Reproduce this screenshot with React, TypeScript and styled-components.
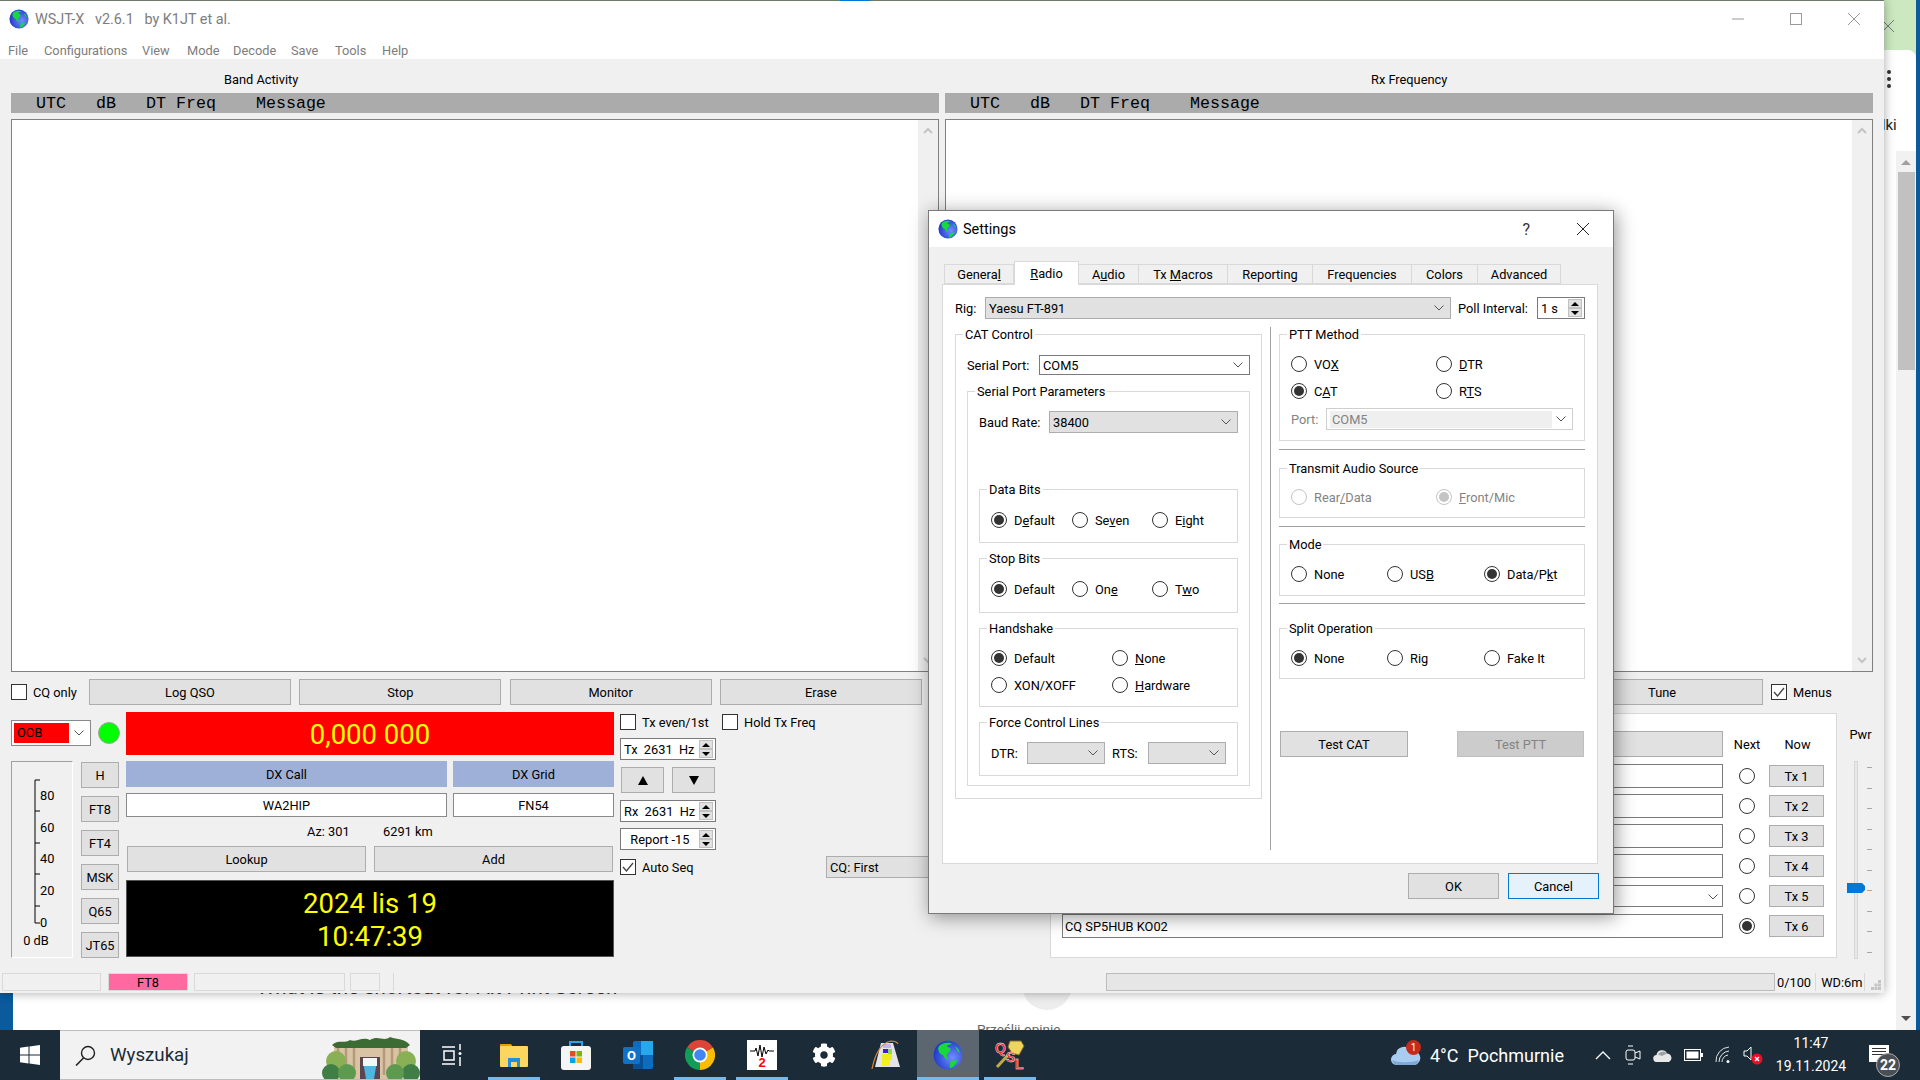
import styled, { createGlobalStyle } from "styled-components";
import { FaCog } from "react-icons/fa";
import type { ReactNode } from "react";

const Global = createGlobalStyle`
  html, body { margin: 0; padding: 0; background: #fff; }
  * { box-sizing: border-box; }
  body { font-family: Roboto, "Open Sans", sans-serif; font-size: 12.8px; color: #000; }
`;

const Desktop = styled.div`
  width: 1920px;
  height: 1080px;
  position: relative;
  overflow: hidden;
  display: flex;
  flex-direction: column;
`;

const Workspace = styled.div`
  position: relative;
  height: 1030px;
  background: #fff;
`;

/* ---- browser window peeking out from behind ---- */
const Peek = styled.div`
  position: absolute;
  left: 1884px;
  top: 0;
  width: 36px;
  height: 1030px;
  display: flex;
`;
const PeekPage = styled.div`
  width: 32px;
  background: #cbe8c0;
  position: relative;
`;
const PeekBody = styled.div`
  position: absolute;
  inset: 50px 0 0 0;
  background: #fff;
  border-top-right-radius: 8px;
`;
const PeekEdge = styled.div`
  width: 4px;
  background: #0a5a9c;
`;
const PeekClose = styled.svg`
  position: absolute;
  left: 0;
  top: 20px;
`;
const PeekDots = styled.div`
  position: absolute;
  left: 3px;
  top: 70px;
  display: flex;
  flex-direction: column;
  gap: 3px;
  i { display: block; width: 4px; height: 4px; border-radius: 50%; background: #333; }
`;
const PeekText = styled.div`
  position: absolute;
  left: -7px;
  top: 116px;
  font-size: 15px;
  color: #222;
`;
const PeekScroll = styled.div`
  position: absolute;
  left: 12px;
  top: 151px;
  width: 20px;
  bottom: 0;
  background: #f1f1f1;
  display: flex;
  flex-direction: column;
  align-items: center;
  padding-top: 9px;
`;
const ScrollThumb = styled.div`
  width: 17px;
  height: 198px;
  background: #c1c1c1;
  margin-top: 7px;
`;
const ScrollArrow = styled.div<{ $down?: boolean }>`
  width: 0;
  height: 0;
  border-left: 5px solid transparent;
  border-right: 5px solid transparent;
  ${(p) => (p.$down ? "border-top: 5px solid #505050; margin-top: auto; margin-bottom: 9px;" : "border-bottom: 5px solid #a0a0a0;")}
`;
const BlueBit = styled.div`
  position: absolute;
  left: 0;
  top: 985px;
  width: 13px;
  height: 45px;
  background: #0a5a9c;
`;
const PageHeading = styled.div`
  position: absolute;
  left: 257px;
  top: 975px;
  font-size: 20.5px;
  color: #333;
  white-space: nowrap;
`;
const PageCircle = styled.div`
  position: absolute;
  left: 1022px;
  top: 960px;
  width: 50px;
  height: 50px;
  border-radius: 50%;
  background: #ededed;
`;
const PageLink = styled.div`
  position: absolute;
  left: 977px;
  top: 1021px;
  font-size: 13.5px;
  color: #666;
  white-space: nowrap;
`;

/* ---- main window ---- */
const MainWindow = styled.div`
  position: absolute;
  left: 0;
  top: 0;
  width: 1884px;
  height: 993px;
  background: #f0f0f0;
  border-top: 1px solid #6c7a6c;
  box-shadow: 0 0 10px rgba(0, 0, 0, 0.35);
  display: flex;
  flex-direction: column;
`;
const TopAccent = styled.div`
  position: absolute;
  top: -1px;
  left: 840px;
  width: 30px;
  height: 1px;
  background: #0078d7;
`;
const TitleBar = styled.div`
  height: 35px;
  background: #fff;
  display: flex;
  align-items: center;
  padding-left: 9px;
  color: #7d7d7d;
  font-size: 14.4px;
  white-space: pre;
`;
const TitleText = styled.span`
  margin: 2px 0 0 6px;
`;
const WinButtons = styled.div`
  margin-left: auto;
  display: flex;
  align-items: center;
  padding-right: 24px;
  gap: 46px;
`;
const MenuBar = styled.div`
  height: 23px;
  background: #fff;
  display: flex;
  align-items: center;
  padding: 5px 0 0 8px;
  color: #7d7d7d;
`;
const MenuItem = styled.span<{ $w: number }>`
  width: ${(p) => p.$w}px;
`;
const Panels = styled.div`
  display: grid;
  grid-template-columns: 928px 928px;
  column-gap: 6px;
  padding-left: 11px;
`;
const PanelTitle = styled.div<{ $indent: number }>`
  height: 34px;
  padding: 13px 0 0 ${(p) => p.$indent}px;
`;
const MonoHeader = styled.div`
  height: 20px;
  background: #ababab;
  font-family: "Liberation Mono", monospace;
  font-size: 16.67px;
  line-height: 22px;
  padding-left: 25px;
  white-space: pre;
`;
const LogBox = styled.div`
  margin-top: 6px;
  height: 553px;
  background: #fff;
  border: 1px solid #808080;
  display: flex;
  justify-content: flex-end;
`;
const LogScroll = styled.div`
  width: 20px;
  background: #f0f0f0;
  display: flex;
  flex-direction: column;
  justify-content: space-between;
  align-items: center;
  padding: 7px 0;
`;
const ActionRow = styled.div`
  margin: 7px 0 0 11px;
  height: 26px;
  display: flex;
  align-items: center;
`;
const Btn = styled.div<{ $w?: number; $h?: number; $off?: boolean; $focus?: boolean }>`
  width: ${(p) => (p.$w ? `${p.$w}px` : "auto")};
  height: ${(p) => p.$h ?? 26}px;
  flex-shrink: 0;
  display: flex;
  align-items: center;
  justify-content: center;
  padding-top: 1px;
  background: ${(p) => (p.$off ? "#cccccc" : p.$focus ? "#e5f1fb" : "#e1e1e1")};
  border: 1px solid ${(p) => (p.$off ? "#bfbfbf" : p.$focus ? "#0078d7" : "#adadad")};
  color: ${(p) => (p.$off ? "#838383" : "#000")};
  white-space: nowrap;
`;
const ActionButtons = styled.div`
  display: flex;
  gap: 8.3px;
  margin-left: 10px;
`;
const CheckRow = styled.label<{ $w?: number; $left?: number }>`
  display: flex;
  align-items: center;
  gap: 6px;
  width: ${(p) => (p.$w ? `${p.$w}px` : "auto")};
  margin-left: ${(p) => p.$left ?? 0}px;
  flex-shrink: 0;
  white-space: nowrap;
`;
const CheckBox = styled.span`
  width: 16px;
  height: 16px;
  background: #fff;
  border: 1px solid #333;
  display: flex;
  align-items: center;
  justify-content: center;
`;
const Bottom = styled.div`
  margin-top: 7px;
  height: 246px;
  display: flex;
  padding-left: 11px;
`;
const ColA = styled.div`
  width: 108px;
  flex-shrink: 0;
  padding-top: 8px;
`;
const BandRow = styled.div`
  display: flex;
  align-items: center;
  gap: 7px;
`;
const BandCombo = styled.div`
  width: 80px;
  height: 26px;
  flex-shrink: 0;
  border: 1px solid #8a8a8a;
  background: #fff;
  display: flex;
  align-items: center;
  padding: 0 6px 0 2px;
  justify-content: space-between;
`;
const BandValue = styled.div`
  width: 55px;
  height: 20px;
  background: #ff0000;
  line-height: 20px;
  padding-left: 3px;
`;
const Led = styled.div`
  width: 22px;
  height: 22px;
  flex-shrink: 0;
  border-radius: 50%;
  background: #00ff00;
  border: 1px solid #a0a0a0;
`;
const MeterRow = styled.div`
  margin-top: 15px;
  display: flex;
`;
const MeterPanel = styled.div`
  width: 62px;
  height: 197px;
  border: 1px solid;
  border-color: #a0a0a0 #fff #fff #a0a0a0;
`;
const ModeColumn = styled.div`
  margin: 1px 0 0 8px;
  width: 38px;
  display: flex;
  flex-direction: column;
  gap: 8px;
`;
const ColB = styled.div`
  margin-left: 7px;
  width: 488px;
`;
const FreqDisplay = styled.div`
  height: 43px;
  background: #ff0000;
  color: #ffff00;
  font-size: 27.5px;
  padding-top: 1px;
  display: flex;
  align-items: center;
  justify-content: center;
`;
const DxGrid = styled.div<{ $top: number }>`
  margin-top: ${(p) => p.$top}px;
  display: grid;
  grid-template-columns: 321px 161px;
  column-gap: 6px;
`;
const DxLabel = styled.div`
  height: 26px;
  background: #9fb0d8;
  padding-top: 1px;
  display: flex;
  align-items: center;
  justify-content: center;
`;
const DxInput = styled.div`
  height: 24px;
  background: #fff;
  border: 1px solid #8a8a8a;
  padding-top: 1px;
  display: flex;
  align-items: center;
  justify-content: center;
`;
const AzRow = styled.div`
  height: 29px;
  display: flex;
  align-items: center;
  padding-left: 181px;
  span:first-child { width: 76px; }
`;
const LookupRow = styled.div`
  display: flex;
  gap: 8px;
  padding-left: 1px;
`;
const ClockPanel = styled.div`
  margin-top: 8px;
  height: 77px;
  background: #000;
  border: 1px solid #555;
  color: #ffff00;
  font-size: 27.5px;
  line-height: 33px;
  text-align: center;
  padding-top: 6px;
`;
const ColC = styled.div`
  margin-left: 6px;
  width: 430px;
  padding-top: 2px;
`;
const TopChecks = styled.div`
  display: flex;
`;
const Spin = styled.div<{ $w?: number; $h?: number; $top?: number }>`
  margin-top: ${(p) => p.$top ?? 0}px;
  width: ${(p) => p.$w ?? 96}px;
  height: ${(p) => p.$h ?? 22}px;
  border: 1px solid #7a7a7a;
  background: #fff;
  display: flex;
  align-items: center;
  justify-content: space-between;
  padding: 0 2px 0 3px;
  white-space: pre;
  flex-shrink: 0;
`;
const SpinButtons = styled.div`
  width: 14px;
  height: 18px;
  display: flex;
  flex-direction: column;
`;
const SpinStep = styled.div`
  flex: 1;
  background: #e1e1e1;
  border: 1px solid #c0c0c0;
  display: flex;
  align-items: center;
  justify-content: center;
`;
const Tri = styled.i<{ $down?: boolean }>`
  display: block;
  border-left: 4px solid transparent;
  border-right: 4px solid transparent;
  ${(p) => (p.$down ? "border-top: 4px solid #000;" : "border-bottom: 4px solid #000;")}
`;
const StepRow = styled.div`
  margin: 7px 0 0 1px;
  display: flex;
  gap: 8px;
`;
const BigTri = styled.i<{ $down?: boolean }>`
  display: block;
  border-left: 5px solid transparent;
  border-right: 5px solid transparent;
  ${(p) => (p.$down ? "border-top: 9px solid #000;" : "border-bottom: 9px solid #000;")}
`;
const AutoRow = styled.div`
  margin-top: 6px;
  display: flex;
  align-items: center;
`;
const CqButton = styled(Btn)`
  justify-content: flex-start;
  padding-left: 3px;
`;
const TxPanel = styled.div`
  margin-top: 1px;
  width: 787px;
  height: 245px;
  background: #fff;
  border: 1px solid #d9d9d9;
  padding: 17px 0 0 11px;
  display: grid;
  grid-template-columns: 661px 16px 55px;
  grid-template-rows: 27px repeat(6, 24px);
  align-content: start;
  column-gap: 16px;
  row-gap: 6px;
  align-items: center;
`;
const TxHead = styled.div`
  height: 26px;
  margin-bottom: 1px;
  display: flex;
  align-items: center;
  justify-content: center;
  white-space: nowrap;
`;
const TxHeadButton = styled(Btn)`
  margin-bottom: 1px;
`;
const TxInput = styled.div`
  height: 24px;
  background: #fff;
  border: 1px solid #7a7a7a;
  padding: 1px 4px 0 2px;
  display: flex;
  align-items: center;
  justify-content: space-between;
`;
const TxCombo = styled(TxInput)`
  height: 22px;
`;
const NowColumn = styled.div`
  margin-left: -2px;
  width: 55px;
  text-align: center;
`;
const ColE = styled.div`
  width: 47px;
`;
const PwrLabel = styled.div`
  margin-top: 15px;
  height: 16px;
  line-height: 16px;
  text-align: center;
`;
const PwrSlider = styled.div`
  margin: 18px 0 0 8px;
  svg { display: block; }
`;
const StatusBar = styled.div`
  margin: 15px 0 0 2px;
  height: 18px;
  display: flex;
  align-items: center;
`;
const StatusCell = styled.div<{ $w: number; $left: number; $bg?: string }>`
  width: ${(p) => p.$w}px;
  margin-left: ${(p) => p.$left}px;
  height: 18px;
  border: 1px solid #d9d9d9;
  background: ${(p) => p.$bg ?? "transparent"};
  display: flex;
  align-items: center;
  justify-content: center;
`;
const StatusSep = styled.div<{ $left: number }>`
  width: 1px;
  height: 18px;
  background: #d9d9d9;
  margin-left: ${(p) => p.$left}px;
`;
const Progress = styled.div`
  margin-left: auto;
  width: 669px;
  height: 18px;
  background: #e6e6e6;
  border: 1px solid #bcbcbc;
`;
const StatusText = styled.div<{ $w: number }>`
  width: ${(p) => p.$w}px;
  padding-left: 2px;
  white-space: nowrap;
`;
const Grip = styled.svg`
  margin: 6px 3px 0 6px;
`;

/* ---- settings dialog ---- */
const Dialog = styled.div`
  position: absolute;
  left: 928px;
  top: 210px;
  width: 686px;
  height: 704px;
  background: #f0f0f0;
  border: 1px solid #7a7a7a;
  box-shadow: 2px 3px 18px rgba(0, 0, 0, 0.42);
  display: flex;
  flex-direction: column;
`;
const DialogTitle = styled.div`
  height: 36px;
  background: #fff;
  display: flex;
  align-items: center;
  padding-left: 9px;
  font-size: 14.5px;
`;
const DialogName = styled.span`
  margin-left: 5px;
`;
const DialogHelp = styled.span`
  margin-left: auto;
  margin-right: 47px;
  font-size: 16px;
  color: #333;
`;
const DialogClose = styled.div`
  margin-right: 24px;
  height: 12px;
  svg { display: block; }
`;
const DialogBody = styled.div`
  padding: 13px 0 0 13px;
`;
const TabStrip = styled.div`
  display: flex;
  align-items: flex-end;
  height: 24px;
  padding-left: 2px;
  position: relative;
  z-index: 1;
`;
const Tab = styled.div<{ $w: number; $active?: boolean }>`
  width: ${(p) => p.$w}px;
  height: ${(p) => (p.$active ? 24 : 20)}px;
  margin-bottom: ${(p) => (p.$active ? -1 : 0)}px;
  background: ${(p) => (p.$active ? "#fff" : "#f0f0f0")};
  border: 1px solid #d9d9d9;
  border-bottom: ${(p) => (p.$active ? "none" : "1px solid #d9d9d9")};
  border-left: ${(p) => (p.$active ? "1px solid #d9d9d9" : "none")};
  display: flex;
  align-items: center;
  justify-content: center;
  white-space: pre;
  &:first-child { border-left: 1px solid #d9d9d9; }
`;
const Pane = styled.div`
  width: 656px;
  height: 580px;
  background: #fff;
  border: 1px solid #d9d9d9;
  padding: 12px 0 0 12px;
`;
const Mn = styled.span`
  text-decoration: underline;
`;
const RigRow = styled.div`
  display: flex;
  align-items: center;
  height: 22px;
`;
const FieldLabel = styled.span<{ $w: number; $off?: boolean; $left?: number }>`
  width: ${(p) => p.$w}px;
  margin-left: ${(p) => p.$left ?? 0}px;
  flex-shrink: 0;
  color: ${(p) => (p.$off ? "#838383" : "#000")};
  white-space: nowrap;
`;
const Combo = styled.div<{ $w: number; $h?: number; $kind?: "white" | "gray" | "off" }>`
  width: ${(p) => p.$w}px;
  height: ${(p) => p.$h ?? 22}px;
  flex-shrink: 0;
  background: ${(p) => (p.$kind === "gray" ? "#e1e1e1" : "#fff")};
  border: 1px solid ${(p) => (p.$kind === "gray" ? "#adadad" : p.$kind === "off" ? "#cfcfcf" : "#7a7a7a")};
  color: ${(p) => (p.$kind === "off" ? "#838383" : "#000")};
  display: flex;
  align-items: center;
  justify-content: space-between;
  padding: 0 6px 0 3px;
`;
const OffValue = styled.div`
  width: 222px;
  height: 17px;
  line-height: 17px;
  background: #efefef;
  padding-left: 2px;
`;
const PollLabel = styled.span`
  margin-left: 7px;
  width: 79px;
  white-space: nowrap;
`;
const Columns = styled.div`
  margin-top: 15px;
  display: flex;
  align-items: flex-start;
`;
const LeftCol = styled.div`
  width: 307px;
`;
const VLine = styled.div`
  width: 1px;
  height: 523px;
  margin: -7px 8px 0 8px;
  background: #a0a0a0;
`;
const RightCol = styled.div`
  width: 306px;
`;
const Group = styled.div<{ $h: number; $top?: number; $pad?: number }>`
  position: relative;
  height: ${(p) => p.$h}px;
  margin-top: ${(p) => p.$top ?? 0}px;
  border: 1px solid #d9d9d9;
  padding: ${(p) => p.$pad ?? 19}px 11px 0 11px;
`;
const Legend = styled.span`
  position: absolute;
  top: -8px;
  left: 7px;
  background: #fff;
  padding: 0 2px;
  line-height: 15px;
  white-space: nowrap;
`;
const InlineField = styled.div<{ $h?: number; $top?: number }>`
  display: flex;
  align-items: center;
  height: ${(p) => p.$h ?? 22}px;
  margin-top: ${(p) => p.$top ?? 0}px;
`;
const RadioGrid = styled.div<{ $cols: string }>`
  display: grid;
  grid-template-columns: ${(p) => p.$cols};
  grid-auto-rows: 20px;
  row-gap: 7px;
`;
const RadioOption = styled.div<{ $off?: boolean }>`
  display: flex;
  align-items: center;
  gap: 7px;
  white-space: nowrap;
  color: ${(p) => (p.$off ? "#838383" : "#000")};
`;
const RadioMark = styled.span<{ $on?: boolean; $off?: boolean }>`
  width: 16px;
  height: 16px;
  flex-shrink: 0;
  border-radius: 50%;
  background: #fff;
  border: 1px solid ${(p) => (p.$off ? "#c4c4c4" : "#333")};
  display: flex;
  align-items: center;
  justify-content: center;
  &::after {
    content: "";
    display: ${(p) => (p.$on ? "block" : "none")};
    width: 10px;
    height: 10px;
    border-radius: 50%;
    background: ${(p) => (p.$off ? "#c4c4c4" : "#333")};
  }
`;
const HLine = styled.div<{ $top: number }>`
  height: 1px;
  background: #a0a0a0;
  margin-top: ${(p) => p.$top}px;
`;
const TestRow = styled.div`
  margin-top: 52px;
  padding: 0 1px;
  display: flex;
  justify-content: space-between;
`;
const DialogFooter = styled.div`
  margin-top: 9px;
  padding-right: 14px;
  display: flex;
  justify-content: flex-end;
  gap: 9px;
`;

/* ---- taskbar ---- */
const Taskbar = styled.div`
  height: 50px;
  background: #1b2b38;
  display: flex;
  position: relative;
  z-index: 5;
`;
const StartButton = styled.div`
  width: 60px;
  display: flex;
  align-items: center;
  justify-content: center;
`;
const SearchBox = styled.div`
  width: 360px;
  background: #f2f2f2;
  border-top: 1px solid #bdbdbd;
  border-bottom: 1px solid #bdbdbd;
  display: flex;
  align-items: center;
  padding-left: 15px;
  gap: 14px;
  font-size: 18.7px;
  color: #1b2b38;
`;
const SearchArt = styled.div`
  margin-left: auto;
  height: 48px;
  svg { display: block; }
`;
const TaskView = styled.div`
  width: 63px;
  display: flex;
  align-items: center;
  justify-content: center;
`;
const AppSlot = styled.div<{ $open?: boolean; $active?: boolean }>`
  width: 62px;
  position: relative;
  display: flex;
  align-items: center;
  justify-content: center;
  background: ${(p) => (p.$active ? "#5b6670" : "transparent")};
  &::after {
    content: "";
    display: ${(p) => (p.$open ? "block" : "none")};
    position: absolute;
    left: ${(p) => (p.$active ? 0 : 5)}px;
    right: ${(p) => (p.$active ? 0 : 5)}px;
    bottom: 0;
    height: 3px;
    background: #76b9ed;
  }
`;
const Tray = styled.div`
  margin-left: auto;
  display: flex;
  align-items: center;
  color: #fff;
`;
const Weather = styled.div`
  display: flex;
  align-items: center;
  font-size: 18px;
  width: 197px;
  white-space: pre;
  position: relative;
`;
const WeatherBadge = styled.span`
  position: absolute;
  left: 15px;
  top: -5px;
  width: 15px;
  height: 15px;
  border-radius: 50%;
  background: #c42b1c;
  font-size: 10px;
  display: flex;
  align-items: center;
  justify-content: center;
`;
const TrayIcon = styled.div`
  width: 30px;
  display: flex;
  justify-content: center;
  align-items: center;
`;
const TrayClock = styled.div`
  width: 86px;
  text-align: center;
  font-size: 14px;
  line-height: 23px;
`;
const Notify = styled.div`
  width: 66px;
  height: 50px;
  position: relative;
`;
const NotifyPage = styled.div`
  position: absolute;
  left: 15px;
  top: 15px;
  width: 20px;
  height: 17px;
  background: #fff;
  display: flex;
  flex-direction: column;
  gap: 2px;
  padding: 3px 3px;
  i { display: block; height: 1px; background: #333; }
`;
const NotifyBadge = styled.div`
  position: absolute;
  left: 22px;
  top: 23px;
  width: 24px;
  height: 24px;
  border-radius: 50%;
  background: #4a4f55;
  border: 1px solid #aaa;
  font-size: 14px;
  font-weight: 700;
  display: flex;
  align-items: center;
  justify-content: center;
`;

/* ---- little drawings ---- */
const Globe = ({ size }: { size: number }) => (
  <svg width={size} height={size} viewBox="0 0 24 24">
    <defs>
      <radialGradient id="sea" cx="0.65" cy="0.6" r="0.7">
        <stop offset="0" stopColor="#6f8cff" />
        <stop offset="1" stopColor="#1a34c4" />
      </radialGradient>
    </defs>
    <circle cx="12" cy="12" r="11.5" fill="url(#sea)" />
    <path
      d="M5 4.5c3-2.500 8-3 10-1.500-1 1-3 .5-4 2 1 1 3 .8 3 2.500 0 2-2.500 2.500-3 4.500-.3 1.500 1 2.500.5 4-1.500-.5-2.500-2.500-3.500-4-1.500-.5-3-1.500-3.500-3.500C4 7.500 4 6 5 4.500z"
      fill="#18d83c"
    />
    <path d="M14 17c2-.8 4.500-.5 6-1.500-1 3-3.500 6-6 7-1-.5-.5-3.500 0-5.500zM18 5c1.500 1 3 3 3.500 5-1.500 0-3-2.500-3.500-5z" fill="#18d83c" />
  </svg>
);
const Chevron = () => (
  <svg width="10" height="6" viewBox="0 0 10 6">
    <path d="M.5.500 5 5 9.500.5" fill="none" stroke="#555" />
  </svg>
);
const Cross = ({ size, color }: { size: number; color: string }) => (
  <svg width={size} height={size} viewBox="0 0 12 12">
    <path d="M0 0 12 12M12 0 0 12" stroke={color} fill="none" />
  </svg>
);
const ChevronUp = ({ flip }: { flip?: boolean }) => (
  <svg width="10" height="7" viewBox="0 0 10 7">
    <path d={flip ? "M1 1l4 4 4-4" : "M1 6l4-4 4 4"} stroke="#c4c4c4" strokeWidth="2" fill="none" />
  </svg>
);
const Tick = () => (
  <svg width="12" height="10" viewBox="0 0 12 10">
    <path d="M1 5l3.500 4L11 1" stroke="#444" strokeWidth="1.3" fill="none" />
  </svg>
);
const Check = ({ on, label, w, left }: { on?: boolean; label: string; w?: number; left?: number }) => (
  <CheckRow $w={w} $left={left}>
    <CheckBox>{on && <Tick />}</CheckBox>
    {label}
  </CheckRow>
);
const Radio = ({ on, off, children }: { on?: boolean; off?: boolean; children: ReactNode }) => (
  <RadioOption $off={off}>
    <RadioMark $on={on} $off={off} />
    <span>{children}</span>
  </RadioOption>
);
const Stepper = () => (
  <SpinButtons>
    <SpinStep>
      <Tri />
    </SpinStep>
    <SpinStep>
      <Tri $down />
    </SpinStep>
  </SpinButtons>
);

const Meter = () => (
  <svg width="60" height="195" viewBox="0 0 60 195">
    <path d="M28 18H23V161H28M23 49H28M23 81H28M23 112H28M23 144H28" fill="none" stroke="#000" />
    {[
      ["80", 38],
      ["60", 70],
      ["40", 101],
      ["20", 133],
      ["0", 165],
    ].map(([t, y]) => (
      <text key={t} x="28" y={y} fontSize="12.8" fontFamily="Roboto, sans-serif">
        {t}
      </text>
    ))}
    <text x="24" y="183" fontSize="12.8" textAnchor="middle" fontFamily="Roboto, sans-serif">
      0 dB
    </text>
  </svg>
);

const pwrTicks = [6, 27, 47, 68, 88, 109, 129, 150, 170, 191];
const Slider = () => (
  <svg width="30" height="198" viewBox="0 0 30 198">
    <rect x="9.500" y=".5" width="3" height="197" fill="#e7e7e7" stroke="#d6d6d6" />
    {pwrTicks.map((y) => (
      <path key={y} d={`M22 ${y + 0.5}H27`} stroke="#a8a8a8" />
    ))}
    <path d="M2 122H17L20 125V129L17 132H2Z" fill="#0078d7" />
  </svg>
);

const WinLogo = () => (
  <svg width="20" height="20" viewBox="0 0 20 20">
    <path d="M0 2.800 8.500 1.600V9.500H0ZM9.500 1.500 20 0V9.500H9.500ZM0 10.500H8.500V18.400L0 17.200ZM9.500 10.500H20V20L9.500 18.500Z" fill="#fff" />
  </svg>
);
const SearchGlass = () => (
  <svg width="21" height="21" viewBox="0 0 21 21">
    <circle cx="13" cy="8" r="6.500" fill="none" stroke="#222" strokeWidth="1.400" />
    <path d="M8.500 13 1 20.500" stroke="#222" strokeWidth="1.600" />
  </svg>
);
const Waterfall = () => (
  <svg width="98" height="48" viewBox="0 0 98 48">
    <rect x="12" y="14" width="74" height="34" fill="#d8c3a5" />
    <path d="M16 14v30M24 14v30M32 14v30M62 14v30M70 14v30M78 14v30" stroke="#b49a7a" strokeWidth="2.500" />
    <path d="M10 14c6-6 12-1 18-5 6 3 12-4 20 0 8-5 14 2 20-3 8 3 14 1 20 8l-4 3H14Z" fill="#3d6b34" />
    <rect x="38" y="26" width="20" height="22" fill="#5b4550" />
    <path d="M41 30h14l-3 18h-8Z" fill="#4ab8e0" />
    <path d="M41 27h14v8H41Z" fill="#f2f7f7" />
    <circle cx="14" cy="30" r="10" fill="#8ab055" />
    <circle cx="9" cy="42" r="9" fill="#3f7f45" />
    <circle cx="25" cy="42" r="9" fill="#5d9a50" />
    <circle cx="84" cy="30" r="10" fill="#8ab055" />
    <circle cx="89" cy="42" r="9" fill="#3f7f45" />
    <circle cx="73" cy="42" r="9" fill="#5d9a50" />
  </svg>
);
const TaskViewIcon = () => (
  <svg width="20" height="24" viewBox="0 0 20 24" fill="none" stroke="#fff" strokeWidth="1.500">
    <path d="M0 4h13M2 8h10v9H2ZM0 21h13M18 1v6M18 14v9" />
    <circle cx="18" cy="10.500" r="1.500" fill="#fff" stroke="none" />
  </svg>
);
const Explorer = () => (
  <svg width="28" height="24" viewBox="0 0 28 24">
    <path d="M0 1h11l2 3H0Z" fill="#dfa100" />
    <rect y="3" width="28" height="21" rx="1" fill="#fbd75f" />
    <path d="M8 15h12v9h-3v-5h-6v5H8Z" fill="#1f8fe0" />
  </svg>
);
const Store = () => (
  <svg width="30" height="30" viewBox="0 0 30 30">
    <path d="M9 7V2h12v5" fill="none" stroke="#2aa6e8" strokeWidth="2" />
    <rect y="6" width="30" height="24" rx="3" fill="#f5f5f5" />
    <rect x="9" y="11" width="5.500" height="5.500" fill="#e74c24" />
    <rect x="15.500" y="11" width="5.500" height="5.500" fill="#7eb900" />
    <rect x="9" y="17.500" width="5.500" height="5.500" fill="#00a4ef" />
    <rect x="15.500" y="17.500" width="5.500" height="5.500" fill="#ffb900" />
  </svg>
);
const Outlook = () => (
  <svg width="30" height="28" viewBox="0 0 30 28">
    <rect x="10" y="0" width="20" height="28" rx="2" fill="#0f6cbd" />
    <rect x="18" y="0" width="12" height="14" fill="#28a8ea" />
    <rect x="10" y="14" width="10" height="14" fill="#0a4f94" />
    <rect x="0" y="6" width="17" height="17" rx="2" fill="#1072c6" />
    <text x="8.500" y="19" fontSize="13" fontWeight="700" fill="#fff" textAnchor="middle" fontFamily="Roboto, sans-serif">
      O
    </text>
  </svg>
);
const Chrome = () => (
  <svg width="30" height="30" viewBox="0 0 30 30">
    <path d="M15 15 2 7.500A15 15 0 0 1 28 7.500Z" fill="#db4437" />
    <path d="M15 15 28 7.500A15 15 0 0 1 15 30Z" fill="#fbbc05" />
    <path d="M15 15V30A15 15 0 0 1 2 7.500Z" fill="#0f9d58" />
    <circle cx="15" cy="15" r="7.500" fill="#fff" />
    <circle cx="15" cy="15" r="5.800" fill="#4285f4" />
  </svg>
);
const WaveTwo = () => (
  <svg width="30" height="30" viewBox="0 0 30 30">
    <rect width="30" height="30" fill="#fff" />
    <path d="M3 11h5l1-3 2 8 2-11 2 12 2-10 2 7 2-4 1 1h5" fill="none" stroke="#000" />
    <text x="15" y="27" fontSize="13" fontWeight="700" fill="#f00" textAnchor="middle" fontFamily="'Liberation Sans', sans-serif">
      2
    </text>
  </svg>
);
const Pyramid = () => (
  <svg width="30" height="30" viewBox="0 0 30 30">
    <path d="M10 3h12l7 24H4Z" fill="#e4e4e8" />
    <path d="M12 4h5v4h-5ZM17 4h3v4h-3Z" fill="#c9b0f0" />
    <path d="M12 9h5v4h-5Z" fill="#3a1ed0" />
    <path d="M17 9h4v5h-4Z" fill="#8fd84a" />
    <path d="M11 14h10v6H11Z" fill="#ecec1c" />
    <path d="M11 20h8v6h-8Z" fill="#f4f41c" />
    <path d="M1 29C4 14 10 3 20 1c3 0 6 1 7 3" fill="none" stroke="#e08a2a" strokeWidth="1.200" />
  </svg>
);
const QslKey = () => (
  <svg width="32" height="32" viewBox="0 0 32 32">
    <path d="M3 28 15 15" stroke="#c4a848" strokeWidth="3" />
    <path d="M16 2h11l3 5-5 9-7-2-4-6Z" fill="#ecd660" stroke="#85702a" />
    <g fontFamily="'Liberation Sans', sans-serif" fontWeight="700" fontSize="14" fill="#f02030" stroke="#fff" strokeWidth=".4">
      <text x="1" y="14">Q</text>
      <text x="12" y="23">S</text>
      <text x="21" y="30">L</text>
    </g>
  </svg>
);
const Cloud = () => (
  <svg width="30" height="20" viewBox="0 0 30 20">
    <path d="M6 20a5.500 5.500 0 0 1-1-11 8 8 0 0 1 15-3 6 6 0 0 1 4 14Z" fill="#a9cdf0" />
    <path d="M1 15c5 3 20 3 27 0-1 3-3 5-5 5H6c-2 0-4-2-5-5Z" fill="#7fa8d8" />
  </svg>
);
const TrayUp = () => (
  <svg width="16" height="9" viewBox="0 0 16 9">
    <path d="M1 8 8 1l7 7" fill="none" stroke="#fff" strokeWidth="1.300" />
  </svg>
);
const Meet = () => (
  <svg width="16" height="22" viewBox="0 0 16 22" fill="none" stroke="#fff">
    <rect x="1" y="6" width="9" height="10" rx="2" />
    <path d="M10 9l5-2v8l-5-2M3 2h5M3 20h5" />
  </svg>
);
const OneDrive = () => (
  <svg width="20" height="13" viewBox="0 0 20 13">
    <path d="M4 13a3.500 3.500 0 0 1-.5-7A5.500 5.500 0 0 1 14 4.500a4.500 4.500 0 0 1 2 8.500Z" fill="#e8e8e8" />
    <path d="M5 5.500A5.500 5.500 0 0 1 14 4.500L9 7Z" fill="#9ca3a8" />
  </svg>
);
const Battery = () => (
  <svg width="19" height="12" viewBox="0 0 19 12">
    <rect x=".5" y=".5" width="16" height="11" fill="none" stroke="#fff" />
    <rect x="2.500" y="2.500" width="12" height="7" fill="#fff" />
    <rect x="17" y="4" width="2" height="4" fill="#fff" />
  </svg>
);
const Wifi = () => (
  <svg width="16" height="18" viewBox="0 0 16 18" fill="none" stroke="#dfe3e6">
    <path d="M1 16A14 14 0 0 1 14 1M4 16A11 11 0 0 1 14 5M7 16a7 7 0 0 1 6-7" />
    <circle cx="13" cy="15.500" r="1.500" fill="#fff" stroke="none" />
  </svg>
);
const Speaker = () => (
  <svg width="20" height="20" viewBox="0 0 20 20">
    <path d="M1 6h3l4-4v13L4 11H1Z" fill="none" stroke="#fff" />
    <circle cx="14" cy="14" r="5.500" fill="#e81123" />
    <path d="M12 12l4 4M16 12l-4 4" stroke="#fff" strokeWidth="1.300" />
  </svg>
);

const Box = ({ indent, title }: { indent: number; title: string }) => (
  <div>
    <PanelTitle $indent={indent}>{title}</PanelTitle>
    <MonoHeader>{"UTC   dB   DT Freq    Message"}</MonoHeader>
    <LogBox>
      <LogScroll>
        <ChevronUp />
        <ChevronUp flip />
      </LogScroll>
    </LogBox>
  </div>
);

const menus: [string, number][] = [
  ["File", 36],
  ["Configurations", 98],
  ["View", 45],
  ["Mode", 46],
  ["Decode", 58],
  ["Save", 44],
  ["Tools", 47],
  ["Help", 40],
];
// the middle buttons sit behind the dialog, so they carry no label here
const actions = ["Log QSO", "Stop", "Monitor", "Erase", "", "", "", "Tune"];
const modes = ["H", "FT8", "FT4", "MSK", "Q65", "JT65"];
const txRows = ["", "", "", "", "combo", "CQ SP5HUB KO02"];

function TxLine({ index, text }: { index: number; text: string }) {
  return (
    <>
      {text === "combo" ? (
        <TxCombo>
          <span />
          <Chevron />
        </TxCombo>
      ) : (
        <TxInput>{text}</TxInput>
      )}
      <RadioMark $on={index === 5} />
      <NowColumn>
        <Btn $h={22}>Tx {index + 1}</Btn>
      </NowColumn>
    </>
  );
}

function App() {
  return (
    <Desktop>
      <Global />
      <Workspace>
        <Peek>
          <PeekPage>
            <PeekClose width="10" height="12" viewBox="0 0 10 12">
              <path d="M-2 0 10 12M10 0-2 12" stroke="#777" fill="none" />
            </PeekClose>
            <PeekBody />
            <PeekDots>
              <i />
              <i />
              <i />
            </PeekDots>
            <PeekText>dki</PeekText>
            <PeekScroll>
              <ScrollArrow />
              <ScrollThumb />
              <ScrollArrow $down />
            </PeekScroll>
          </PeekPage>
          <PeekEdge />
        </Peek>
        <BlueBit />
        <PageHeading>What is the shortcut for Alt Print Screen</PageHeading>
        <PageCircle />
        <PageLink>Prześlij opinię</PageLink>

        <MainWindow>
          <TopAccent />
          <TitleBar>
            <Globe size={20} />
            <TitleText>{"WSJT-X   v2.6.1   by K1JT et al."}</TitleText>
            <WinButtons>
              <svg width="12" height="2" viewBox="0 0 12 2">
                <path d="M0 1H12" stroke="#999" />
              </svg>
              <svg width="12" height="12" viewBox="0 0 12 12">
                <rect x=".5" y=".5" width="11" height="11" fill="none" stroke="#999" />
              </svg>
              <Cross size={12} color="#999" />
            </WinButtons>
          </TitleBar>
          <MenuBar>
            {menus.map(([m, w]) => (
              <MenuItem key={m} $w={w}>
                {m}
              </MenuItem>
            ))}
          </MenuBar>
          <Panels>
            <Box indent={213} title="Band Activity" />
            <Box indent={426} title="Rx Frequency" />
          </Panels>
          <ActionRow>
            <Check label="CQ only" w={68} />
            <ActionButtons>
              {actions.map((a, i) => (
                <Btn key={i} $w={202}>
                  {a}
                </Btn>
              ))}
            </ActionButtons>
            <Check on label="Menus" left={8} />
          </ActionRow>
          <Bottom>
            <ColA>
              <BandRow>
                <BandCombo>
                  <BandValue>OOB</BandValue>
                  <Chevron />
                </BandCombo>
                <Led />
              </BandRow>
              <MeterRow>
                <MeterPanel>
                  <Meter />
                </MeterPanel>
                <ModeColumn>
                  {modes.map((m) => (
                    <Btn key={m}>{m}</Btn>
                  ))}
                </ModeColumn>
              </MeterRow>
            </ColA>
            <ColB>
              <FreqDisplay>0,000 000</FreqDisplay>
              <DxGrid $top={6}>
                <DxLabel>DX Call</DxLabel>
                <DxLabel>DX Grid</DxLabel>
              </DxGrid>
              <DxGrid $top={6}>
                <DxInput>WA2HIP</DxInput>
                <DxInput>FN54</DxInput>
              </DxGrid>
              <AzRow>
                <span>Az: 301</span>
                <span>6291 km</span>
              </AzRow>
              <LookupRow>
                <Btn $w={239}>Lookup</Btn>
                <Btn $w={239}>Add</Btn>
              </LookupRow>
              <ClockPanel>
                2024 lis 19
                <br />
                10:47:39
              </ClockPanel>
            </ColB>
            <ColC>
              <TopChecks>
                <Check label="Tx even/1st" w={102} />
                <Check label="Hold Tx Freq" />
              </TopChecks>
              <Spin $top={8}>
                {"Tx  2631  Hz"}
                <Stepper />
              </Spin>
              <StepRow>
                <Btn $w={43}>
                  <BigTri />
                </Btn>
                <Btn $w={43}>
                  <BigTri $down />
                </Btn>
              </StepRow>
              <Spin $top={7}>
                {"Rx  2631  Hz"}
                <Stepper />
              </Spin>
              <Spin $top={6}>
                {"  Report -15"}
                <Stepper />
              </Spin>
              <AutoRow>
                <Check on label="Auto Seq" w={206} />
                <CqButton $w={200} $h={22}>
                  CQ: First
                </CqButton>
              </AutoRow>
            </ColC>
            <TxPanel>
              <TxHeadButton />
              <TxHead>Next</TxHead>
              <TxHead>
                <NowColumn>Now</NowColumn>
              </TxHead>
              {txRows.map((t, i) => (
                <TxLine key={i} index={i} text={t} />
              ))}
            </TxPanel>
            <ColE>
              <PwrLabel>Pwr</PwrLabel>
              <PwrSlider>
                <Slider />
              </PwrSlider>
            </ColE>
          </Bottom>
          <StatusBar>
            <StatusCell $w={99} $left={0} />
            <StatusCell $w={80} $left={7} $bg="#ff69a0">
              FT8
            </StatusCell>
            <StatusCell $w={151} $left={6} />
            <StatusCell $w={30} $left={5} />
            <StatusSep $left={13} />
            <Progress />
            <StatusText $w={40}>0/100</StatusText>
            <StatusSep $left={0} />
            <StatusText $w={48}>&nbsp;WD:6m</StatusText>
            <StatusSep $left={0} />
            <Grip width="10" height="10" viewBox="0 0 10 10" fill="#c4c4c4">
              <rect x="7" y="0" width="3" height="3" />
              <rect x="3.500" y="3.500" width="3" height="3" />
              <rect x="7" y="3.500" width="3" height="3" />
              <rect x="0" y="7" width="3" height="3" />
              <rect x="3.500" y="7" width="3" height="3" />
              <rect x="7" y="7" width="3" height="3" />
            </Grip>
          </StatusBar>
        </MainWindow>

        <Dialog>
          <DialogTitle>
            <Globe size={20} />
            <DialogName>Settings</DialogName>
            <DialogHelp>?</DialogHelp>
            <DialogClose>
              <Cross size={12} color="#222" />
            </DialogClose>
          </DialogTitle>
          <DialogBody>
            <TabStrip>
              <Tab $w={70}>
                <span>
                  Genera<Mn>l</Mn>
                </span>
              </Tab>
              <Tab $w={65} $active>
                <span>
                  <Mn>R</Mn>adio
                </span>
              </Tab>
              <Tab $w={60}>
                <span>
                  A<Mn>u</Mn>dio
                </span>
              </Tab>
              <Tab $w={89}>
                <span>
                  Tx <Mn>M</Mn>acros
                </span>
              </Tab>
              <Tab $w={85}>
                <span>
                  Reportin<Mn>g</Mn>
                </span>
              </Tab>
              <Tab $w={99}>Frequencies</Tab>
              <Tab $w={66}>Colors</Tab>
              <Tab $w={83}>Advanced</Tab>
            </TabStrip>
            <Pane>
              <RigRow>
                <FieldLabel $w={30}>Rig:</FieldLabel>
                <Combo $w={466} $kind="gray">
                  Yaesu FT-891
                  <Chevron />
                </Combo>
                <PollLabel>Poll Interval:</PollLabel>
                <Spin $w={48}>
                  1 s
                  <Stepper />
                </Spin>
              </RigRow>
              <Columns>
                <LeftCol>
                  <Group $h={465} $pad={20}>
                    <Legend>CAT Control</Legend>
                    <InlineField $h={20}>
                      <FieldLabel $w={72}>Serial Port:</FieldLabel>
                      <Combo $w={211} $h={20}>
                        COM5
                        <Chevron />
                      </Combo>
                    </InlineField>
                    <Group $h={395} $top={16}>
                      <Legend>Serial Port Parameters</Legend>
                      <InlineField>
                        <FieldLabel $w={70}>Baud Rate:</FieldLabel>
                        <Combo $w={189} $kind="gray">
                          38400
                          <Chevron />
                        </Combo>
                      </InlineField>
                      <Group $h={54} $top={56} $pad={20}>
                        <Legend>Data Bits</Legend>
                        <RadioGrid $cols="81px 80px 1fr">
                          <Radio on>
                            D<Mn>e</Mn>fault
                          </Radio>
                          <Radio>
                            Se<Mn>v</Mn>en
                          </Radio>
                          <Radio>
                            E<Mn>i</Mn>ght
                          </Radio>
                        </RadioGrid>
                      </Group>
                      <Group $h={55} $top={15} $pad={20}>
                        <Legend>Stop Bits</Legend>
                        <RadioGrid $cols="81px 80px 1fr">
                          <Radio on>Default</Radio>
                          <Radio>
                            On<Mn>e</Mn>
                          </Radio>
                          <Radio>
                            T<Mn>w</Mn>o
                          </Radio>
                        </RadioGrid>
                      </Group>
                      <Group $h={79} $top={15}>
                        <Legend>Handshake</Legend>
                        <RadioGrid $cols="121px 1fr">
                          <Radio on>Default</Radio>
                          <Radio>
                            <Mn>N</Mn>one
                          </Radio>
                          <Radio>XON/XOFF</Radio>
                          <Radio>
                            <Mn>H</Mn>ardware
                          </Radio>
                        </RadioGrid>
                      </Group>
                      <Group $h={54} $top={15}>
                        <Legend>Force Control Lines</Legend>
                        <InlineField>
                          <FieldLabel $w={36}>DTR:</FieldLabel>
                          <Combo $w={78} $kind="gray">
                            <span />
                            <Chevron />
                          </Combo>
                          <FieldLabel $w={36} $left={7}>
                            RTS:
                          </FieldLabel>
                          <Combo $w={78} $kind="gray">
                            <span />
                            <Chevron />
                          </Combo>
                        </InlineField>
                      </Group>
                    </Group>
                  </Group>
                </LeftCol>
                <VLine />
                <RightCol>
                  <Group $h={107}>
                    <Legend>PTT Method</Legend>
                    <RadioGrid $cols="145px 1fr">
                      <Radio>
                        VO<Mn>X</Mn>
                      </Radio>
                      <Radio>
                        <Mn>D</Mn>TR
                      </Radio>
                      <Radio on>
                        C<Mn>A</Mn>T
                      </Radio>
                      <Radio>
                        R<Mn>T</Mn>S
                      </Radio>
                    </RadioGrid>
                    <InlineField $top={7}>
                      <FieldLabel $w={35} $off>
                        Port:
                      </FieldLabel>
                      <Combo $w={247} $kind="off">
                        <OffValue>COM5</OffValue>
                        <Chevron />
                      </Combo>
                    </InlineField>
                  </Group>
                  <HLine $top={8} />
                  <Group $h={50} $top={18} $pad={18}>
                    <Legend>Transmit Audio Source</Legend>
                    <RadioGrid $cols="145px 1fr">
                      <Radio off>
                        Rear<Mn>/</Mn>Data
                      </Radio>
                      <Radio off on>
                        <Mn>F</Mn>ront/Mic
                      </Radio>
                    </RadioGrid>
                  </Group>
                  <HLine $top={8} />
                  <Group $h={52} $top={17}>
                    <Legend>Mode</Legend>
                    <RadioGrid $cols="96px 97px 1fr">
                      <Radio>None</Radio>
                      <Radio>
                        US<Mn>B</Mn>
                      </Radio>
                      <Radio on>
                        Data/P<Mn>k</Mn>t
                      </Radio>
                    </RadioGrid>
                  </Group>
                  <HLine $top={7} />
                  <Group $h={51} $top={24}>
                    <Legend>Split Operation</Legend>
                    <RadioGrid $cols="96px 97px 1fr">
                      <Radio on>None</Radio>
                      <Radio>Rig</Radio>
                      <Radio>Fake It</Radio>
                    </RadioGrid>
                  </Group>
                  <TestRow>
                    <Btn $w={128}>Test CAT</Btn>
                    <Btn $w={127} $off>
                      Test PTT
                    </Btn>
                  </TestRow>
                </RightCol>
              </Columns>
            </Pane>
            <DialogFooter>
              <Btn $w={91}>OK</Btn>
              <Btn $w={91} $focus>
                Cancel
              </Btn>
            </DialogFooter>
          </DialogBody>
        </Dialog>
      </Workspace>

      <Taskbar>
        <StartButton>
          <WinLogo />
        </StartButton>
        <SearchBox>
          <SearchGlass />
          Wyszukaj
          <SearchArt>
            <Waterfall />
          </SearchArt>
        </SearchBox>
        <TaskView>
          <TaskViewIcon />
        </TaskView>
        <AppSlot $open>
          <Explorer />
        </AppSlot>
        <AppSlot>
          <Store />
        </AppSlot>
        <AppSlot>
          <Outlook />
        </AppSlot>
        <AppSlot $open>
          <Chrome />
        </AppSlot>
        <AppSlot $open>
          <WaveTwo />
        </AppSlot>
        <AppSlot>
          <FaCog size={24} color="#fff" />
        </AppSlot>
        <AppSlot>
          <Pyramid />
        </AppSlot>
        <AppSlot $open $active>
          <Globe size={30} />
        </AppSlot>
        <AppSlot $open>
          <QslKey />
        </AppSlot>
        <Tray>
          <Weather>
            <Cloud />
            <WeatherBadge>1</WeatherBadge>
            {"  4°C  Pochmurnie"}
          </Weather>
          <TrayIcon>
            <TrayUp />
          </TrayIcon>
          <TrayIcon>
            <Meet />
          </TrayIcon>
          <TrayIcon>
            <OneDrive />
          </TrayIcon>
          <TrayIcon>
            <Battery />
          </TrayIcon>
          <TrayIcon>
            <Wifi />
          </TrayIcon>
          <TrayIcon>
            <Speaker />
          </TrayIcon>
          <TrayClock>
            11:47
            <br />
            19.11.2024
          </TrayClock>
          <Notify>
            <NotifyPage>
              <i />
              <i />
              <i />
            </NotifyPage>
            <NotifyBadge>22</NotifyBadge>
          </Notify>
        </Tray>
      </Taskbar>
    </Desktop>
  );
}

export default App;
